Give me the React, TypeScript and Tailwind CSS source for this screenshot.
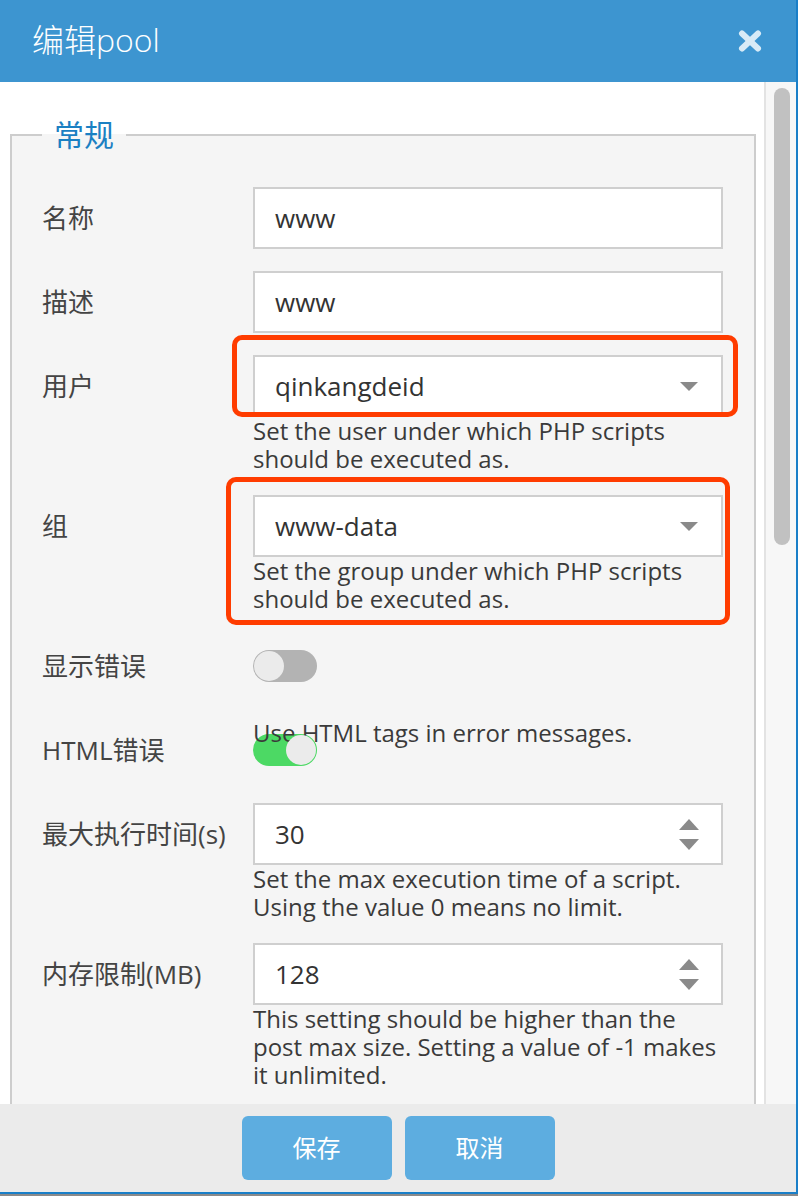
import React from "react";

function Caret({ up = false }: { up?: boolean }) {
  return (
    <svg width="20" height="11" viewBox="0 0 20 11">
      {up ? <polygon points="0,11 20,11 10,0" fill="#8a8a8a" /> : <polygon points="0,0 20,0 10,11" fill="#8a8a8a" />}
    </svg>
  );
}

function Label({ children }: { children: React.ReactNode }) {
  return <div className="h-[62px] flex items-center text-[26px] text-[#444]">{children}</div>;
}

function Box({ children, right }: { children: React.ReactNode; right?: React.ReactNode }) {
  return (
    <div className="h-[62px] border-2 border-[#cfcfcf] bg-white flex items-center justify-between pl-[20px] pr-[22px] text-[26px] text-[#333]">
      <span>{children}</span>
      {right}
    </div>
  );
}

function Help({ children }: { children: React.ReactNode }) {
  return <p className="text-[24px] leading-[28px] text-[#3a3a3a]">{children}</p>;
}

function Toggle({ on }: { on: boolean }) {
  return (
    <div
      className={
        "w-[64px] h-[32px] rounded-full p-[1px] flex " +
        (on ? "bg-[#4cd964] justify-end" : "bg-[#b3b3b3] justify-start")
      }
    >
      <div className="w-[30px] h-[30px] rounded-full bg-[#ebebeb]" />
    </div>
  );
}

function Row({ label, children }: { label: React.ReactNode; children: React.ReactNode }) {
  return (
    <div className="grid grid-cols-[211px_470px]">
      <Label>{label}</Label>
      <div className="relative">{children}</div>
    </div>
  );
}

const selectArrow = (
  <span className="w-[20px] flex justify-center">
    <svg width="18" height="9" viewBox="0 0 18 9">
      <polygon points="0,0 18,0 9,9" fill="#8a8a8a" />
    </svg>
  </span>
);

const spinner = (
  <span className="flex flex-col items-center gap-[9px]">
    <Caret up />
    <Caret />
  </span>
);

export default function App() {
  return (
    <div className="w-[798px] h-[1196px] flex flex-col bg-[#8a8a8a] font-['Open_Sans','Noto_Sans_CJK_SC',sans-serif]">
      <div className="flex-1 flex flex-col border-r-2 border-b-2 border-[#1a7fc8] bg-white min-h-0">
        {/* Header */}
        <div className="h-[82px] shrink-0 bg-[#3d95d0] flex items-center justify-between pl-[32px] pr-[34px]">
          <h1 className="text-[32px] font-light text-white leading-[40px] -mt-[2px]">编辑pool</h1>
          <svg width="24" height="22" viewBox="0 0 24 22">
            <g stroke="#d8ebf7" strokeWidth="6" strokeLinecap="round">
              <line x1="4" y1="3.5" x2="20" y2="18.5" />
              <line x1="20" y1="3.5" x2="4" y2="18.5" />
            </g>
          </svg>
        </div>

        {/* Body */}
        <div className="flex-1 min-h-0 flex overflow-hidden">
          <div className="flex-1 min-w-0 pl-[10px] pr-[8px] pt-[33px]">
            <fieldset className="border-2 border-[#cdcdcd] bg-[#f5f5f5] pl-[30px] pr-[31px] pt-[32px] pb-[60px]">
              <legend className="px-[12px] text-[30px] leading-[40px] text-[#1b80c3]">常规</legend>
              <div className="flex flex-col gap-[22px]">
                <Row label="名称">
                  <Box>www</Box>
                </Row>
                <Row label="描述">
                  <Box>www</Box>
                </Row>
                <Row label="用户">
                  <Box right={selectArrow}>qinkangdeid</Box>
                  <Help>Set the user under which PHP scripts should be executed as.</Help>
                  <div className="absolute left-[-21px] top-[-20px] w-[506px] h-[82px] border-[5px] border-[#ff3c00] rounded-[10px]" />
                </Row>
                <Row label="组">
                  <Box right={selectArrow}>www-data</Box>
                  <Help>Set the group under which PHP scripts should be executed as.</Help>
                  <div className="absolute left-[-27px] top-[-18px] w-[504px] h-[148px] border-[5px] border-[#ff3c00] rounded-[10px]" />
                </Row>
                <Row label="显示错误">
                  <div className="h-[62px] flex items-center">
                    <Toggle on={false} />
                  </div>
                </Row>
                <Row label="HTML错误">
                  <Help>Use HTML tags in error messages.</Help>
                  <div className="mt-[-13px]">
                    <Toggle on />
                  </div>
                </Row>
                <Row label="最大执行时间(s)">
                  <Box right={spinner}>30</Box>
                  <Help>Set the max execution time of a script. Using the value 0 means no limit.</Help>
                </Row>
                <Row label="内存限制(MB)">
                  <Box right={spinner}>128</Box>
                  <Help>This setting should be higher than the post max size. Setting a value of -1 makes it unlimited.</Help>
                </Row>
              </div>
            </fieldset>
          </div>
          {/* Scrollbar */}
          <div className="w-[32px] shrink-0 border-l-2 border-[#e3e3e3] bg-[#f7f7f7] pl-[8px] pr-[6px] pt-[6px]">
            <div className="w-[16px] h-[457px] rounded-full bg-[#c1c1c1]" />
          </div>
        </div>

        {/* Footer */}
        <div className="h-[88px] shrink-0 bg-[#ebebeb] flex justify-center items-start pt-[12px] gap-[13px]">
          <button className="w-[150px] h-[64px] rounded-[6px] bg-[#5dade0] text-white text-[24px]">保存</button>
          <button className="w-[150px] h-[64px] rounded-[6px] bg-[#5dade0] text-white text-[24px]">取消</button>
        </div>
      </div>
      <div className="h-[2px] shrink-0" />
    </div>
  );
}
